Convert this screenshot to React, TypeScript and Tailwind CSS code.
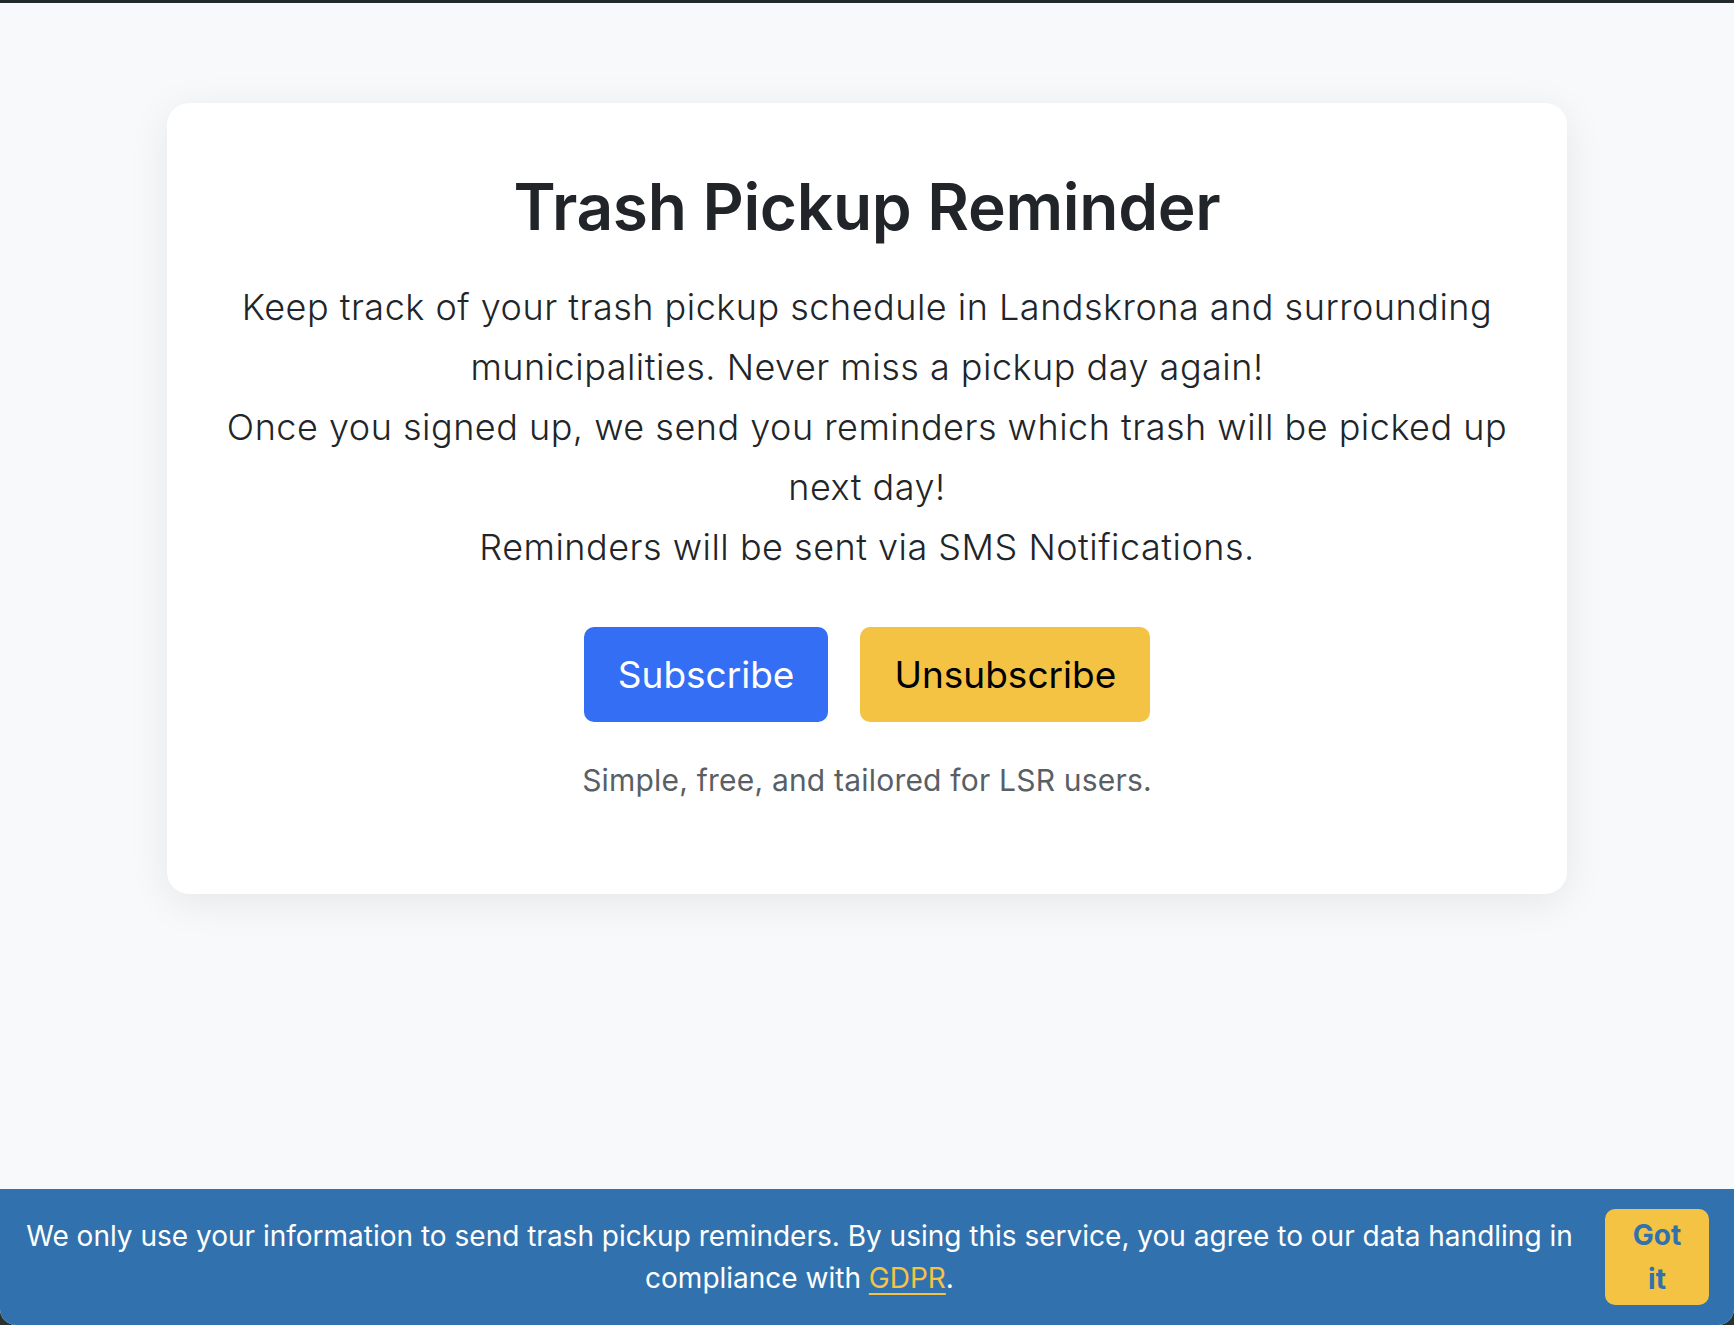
import React from "react";

export default function App() {
  return (
    <div
      className="h-screen w-full flex flex-col bg-[#2a3230]"
      style={{ fontFamily: "Inter, 'Noto Sans', sans-serif" }}
    >
      <div className="h-[3px] bg-[#222a2b] shrink-0" />
      <div className="flex-1 flex flex-col bg-[#f8f9fa] rounded-b-[16px] overflow-hidden">
        <main className="flex-1 flex justify-center pt-[100px]">
          <div className="w-[1400px] h-[791px] bg-white rounded-[22px] shadow-[0_8px_40px_rgba(0,0,0,0.08)] flex flex-col items-center pt-[62px] px-[40px]">
            <h1 className="text-[64px] leading-[84px] font-semibold text-[#212529] tracking-[-0.3px]">
              Trash Pickup Reminder
            </h1>
            <div className="mt-[28px] text-[36px] leading-[60px] text-[#212529] text-center font-light tracking-[0.5px]">
              <p>
                Keep track of your trash pickup schedule in Landskrona and surrounding
                <br />
                municipalities. Never miss a pickup day again!
              </p>
              <p>
                Once you signed up, we send you reminders which trash will be picked up
                <br />
                next day!
              </p>
              <p>Reminders will be sent via SMS Notifications.</p>
            </div>
            <div className="mt-[50px] flex gap-[32px]">
              <button className="h-[95px] px-[34px] rounded-[10px] bg-[#336ef4] text-white text-[37px]">
                Subscribe
              </button>
              <button className="h-[95px] px-[34px] rounded-[10px] bg-[#f4c343] text-black text-[37px]">
                Unsubscribe
              </button>
            </div>
            <p className="mt-[40px] text-[30px] leading-[36px] text-[#595f65] tracking-[0.2px]">
              Simple, free, and tailored for LSR users.
            </p>
          </div>
        </main>
        <footer className="h-[136px] shrink-0 bg-[#3171ae] flex items-center pl-[24px] pr-[25px] py-[20px] gap-[30px]">
          <p className="flex-1 text-center text-white text-[28px] leading-[42px]">
            We only use your information to send trash pickup reminders. By using this service, you agree to our data handling in
            <br />
            compliance with{" "}
            <a href="#" className="text-[#f4c343] underline underline-offset-[5px] decoration-2">
              GDPR
            </a>
            .
          </p>
          <button className="w-[104px] h-[96px] shrink-0 rounded-[10px] bg-[#f4c343] text-[#3171ae] font-bold text-[28px] leading-[44px]">
            Got
            <br />
            it
          </button>
        </footer>
      </div>
    </div>
  );
}
